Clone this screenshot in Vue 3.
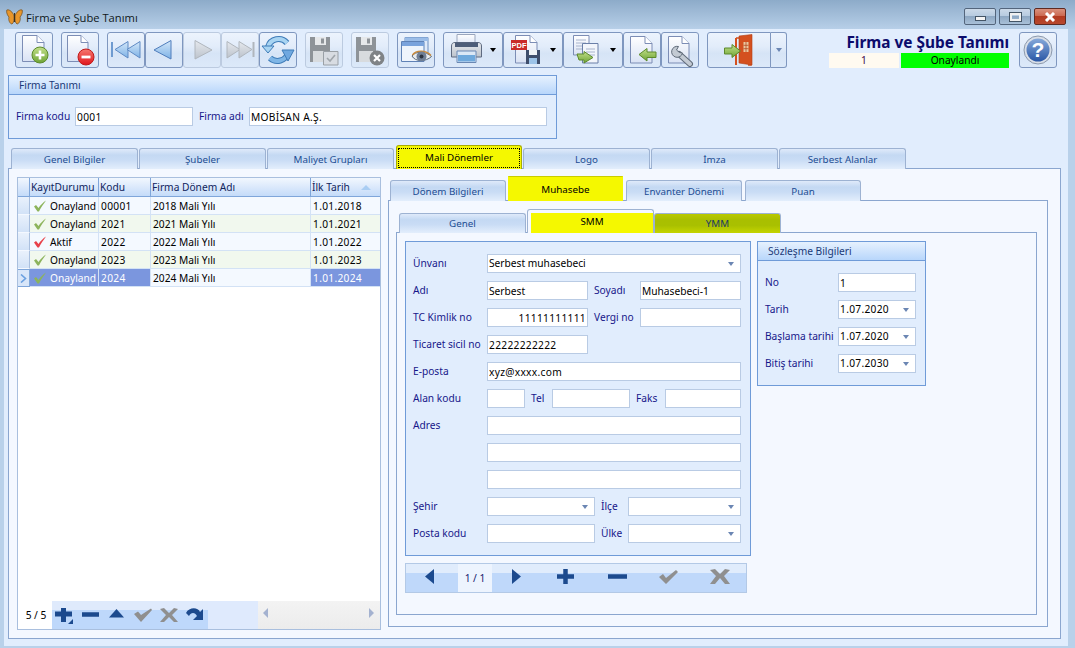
<script setup>
const anaSekmeler = ['Genel Bilgiler', 'Şubeler', 'Maliyet Grupları', 'Mali Dönemler', 'Logo', 'İmza', 'Serbest Alanlar']
const donemSekmeler = ['Dönem Bilgileri', 'Muhasebe', 'Envanter Dönemi', 'Puan']

const donemler = [
  { durum: 'Onayland', kod: '00001', ad: '2018 Mali Yılı', tarih: '1.01.2018', renk: '#8db45c' },
  { durum: 'Onayland', kod: '2021', ad: '2021 Mali Yılı', tarih: '1.01.2021', renk: '#8db45c' },
  { durum: 'Aktif', kod: '2022', ad: '2022 Mali Yılı', tarih: '1.01.2022', renk: '#e8414a' },
  { durum: 'Onayland', kod: '2023', ad: '2023 Mali Yılı', tarih: '1.01.2023', renk: '#8db45c' },
  { durum: 'Onayland', kod: '2024', ad: '2024 Mali Yılı', tarih: '1.01.2024', renk: '#8db45c' }
]

const sozlesme = [
  { etiket: 'Tarih', deger: '1.07.2020' },
  { etiket: 'Başlama tarihi', deger: '1.07.2020' },
  { etiket: 'Bitiş tarihi', deger: '1.07.2030' }
]
</script>

<template>
  <div class="window">
    <svg class="defs" width="0" height="0">
      <defs>
        <linearGradient id="sayfa" x1="0" y1="0" x2="0" y2="1"><stop offset="0" stop-color="#ffffff" /><stop offset="1" stop-color="#d9e2f4" /></linearGradient>
        <linearGradient id="mavi" x1="0" y1="0" x2="0" y2="1"><stop offset="0" stop-color="#d4e7f9" /><stop offset="1" stop-color="#7db2e6" /></linearGradient>
        <linearGradient id="gri" x1="0" y1="0" x2="0" y2="1"><stop offset="0" stop-color="#e6e9ee" /><stop offset="1" stop-color="#bcc3cc" /></linearGradient>
        <linearGradient id="yesil" x1="0" y1="0" x2="0" y2="1"><stop offset="0" stop-color="#c3e08a" /><stop offset="1" stop-color="#6ea436" /></linearGradient>
        <linearGradient id="kirmizi" x1="0" y1="0" x2="0" y2="1"><stop offset="0" stop-color="#f67a70" /><stop offset="1" stop-color="#e0141c" /></linearGradient>
        <linearGradient id="yardim" x1="0" y1="0" x2="0" y2="1"><stop offset="0" stop-color="#86a9da" /><stop offset="1" stop-color="#2a57a5" /></linearGradient>
      </defs>
    </svg>

    <div class="titlebar">
      <svg class="kelebek" width="17" height="16" viewBox="0 0 17 16">
        <path d="M8 7C7 3 3 0 .8 1 0 4 2 7 3 8 2 11 4 15 6 15 8 14 8 10 8 7Z" fill="#e8962c" stroke="#6b4a20" stroke-width=".7" />
        <path d="M9 7C10 3 14 0 16.2 1 17 4 15 7 14 8 15 11 13 15 11 15 9 14 9 10 9 7Z" fill="#e8962c" stroke="#6b4a20" stroke-width=".7" />
        <path d="M8.5 4V13" stroke="#3a3020" stroke-width="1" />
      </svg>
      <span class="baslik">Firma ve Şube Tanımı</span>
      <div class="win-btns">
        <div class="win-btn"><i class="ico-min"></i></div>
        <div class="win-btn"><i class="ico-max"></i></div>
        <div class="win-btn kapat">
          <svg width="14" height="10" viewBox="0 0 14 10"><path d="M3 1 11 9M11 1 3 9" stroke="#fff" stroke-width="3" /></svg>
        </div>
      </div>
    </div>

    <div class="body">
      <div class="toolbar">
        <button class="tb">
          <svg width="38" height="36"><path d="M7.5 3.5H22L29 10.5V29.5H7.5Z" fill="url(#sayfa)" stroke="#7c8db5" /><path d="M22 3.5V10.5H29" fill="#fff" stroke="#7c8db5" /><circle cx="25" cy="23" r="8" fill="url(#yesil)" stroke="#5c8a2c" /><path d="M25 18.5V27.5M20.5 23H29.5" stroke="#fff" stroke-width="2.6" /></svg>
        </button>
        <button class="tb ara">
          <svg width="38" height="36"><path d="M6.5 3.5H20L27 10.5V29.5H6.5Z" fill="url(#sayfa)" stroke="#7c8db5" /><path d="M20 3.5V10.5H27" fill="#fff" stroke="#7c8db5" /><circle cx="25" cy="25" r="8" fill="url(#kirmizi)" stroke="#c01818" /><path d="M20.5 25H29.5" stroke="#fff" stroke-width="2.8" /></svg>
        </button>
        <button class="tb ara">
          <svg width="38" height="36"><path d="M5 10V25" stroke="#6f9bd0" stroke-width="2" /><path d="M8 17.5 21 9.5V26Z" fill="url(#mavi)" stroke="#5f8ac4" /><path d="M20 17.5 33 9.5V26Z" fill="url(#mavi)" stroke="#5f8ac4" /></svg>
        </button>
        <button class="tb">
          <svg width="38" height="36"><path d="M9 18 26 8.5V27Z" fill="url(#mavi)" stroke="#4f7dbc" /></svg>
        </button>
        <button class="tb pasif">
          <svg width="38" height="36"><path d="M29 18 12 8.5V27Z" fill="url(#gri)" stroke="#b0b6bd" /></svg>
        </button>
        <button class="tb pasif">
          <svg width="38" height="36"><path d="M19 17.5 6 9.5V26Z" fill="url(#gri)" stroke="#b0b6bd" /><path d="M31 17.5 18 9.5V26Z" fill="url(#gri)" stroke="#b0b6bd" /><path d="M32.5 10V25" stroke="#b0b6bd" stroke-width="2" /></svg>
        </button>
        <button class="tb">
          <svg width="38" height="36" fill="none"><path d="M9 15A11 11 0 0 1 28 11" stroke="#3f7cb8" stroke-width="6" /><path d="M9 15A11 11 0 0 1 28 11" stroke="#a8d4f2" stroke-width="4" /><path d="M29 21A11 11 0 0 1 11 26" stroke="#3f7cb8" stroke-width="6" /><path d="M29 21A11 11 0 0 1 11 26" stroke="#7fb6e6" stroke-width="4" /><path d="M3 14H15L9 21Z" fill="#a8d4f2" stroke="#3f7cb8" /><path d="M23 18H35L29 29Z" fill="#6fa8e0" stroke="#3f7cb8" /></svg>
        </button>
        <button class="tb pasif ara">
          <svg width="38" height="36"><path d="M5 5H25V30H5Z" fill="#8e9398" /><path d="M10 5H21V13H10Z" fill="#e6e8ea" /><path d="M16 6.5H19V11.5H16Z" fill="#8e9398" /><path d="M8 19H22V30H8Z" fill="#d8dbde" /><path d="M18.5 19.5H33V33H18.5Z" fill="#d8dce2" stroke="#9aa0a6" /><path d="M22 26 25 29 30 23" fill="none" stroke="#a0a6ac" stroke-width="1.6" /></svg>
        </button>
        <button class="tb pasif ara">
          <svg width="38" height="36"><path d="M5 5H25V30H5Z" fill="#8e9398" /><path d="M10 5H21V13H10Z" fill="#e6e8ea" /><path d="M16 6.5H19V11.5H16Z" fill="#8e9398" /><path d="M8 19H22V30H8Z" fill="#d8dbde" /><circle cx="26" cy="26" r="7.5" fill="#7f8386" /><path d="M23 23 29 29M29 23 23 29" stroke="#fff" stroke-width="2.2" /></svg>
        </button>
        <button class="tb ara">
          <svg width="38" height="36"><path d="M8 5.500H31V24H8Z" fill="#dfeafa" stroke="#6d8fc0" /><path d="M8 5.500H31V9H8Z" fill="#9bbde8" /><path d="M4.500 9.500H27V29.500H4.500Z" fill="#eef4fc" stroke="#5f82b6" /><path d="M5 10H27V14H5Z" fill="#7aa3dc" /><path d="M15 24C18 19 29 19 34.500 24.500 29 30 18 30 15 24Z" fill="#e9ecef" stroke="#5b6a7a" /><path d="M15.500 23C19 18 29 18 34 23.500" fill="none" stroke="#c98a3c" stroke-width="1.400" /><circle cx="24.500" cy="24.500" r="5" fill="#6f7f96" /><circle cx="24.500" cy="24.500" r="2" fill="#2b3340" /></svg>
        </button>
        <button class="tb acilir ara">
          <svg width="42" height="36"><path d="M14 2.500H32V13H14Z" fill="url(#sayfa)" stroke="#9aa6bd" /><path d="M8.500 14C8.500 11.500 10 10.500 12 10.500H35C37 10.500 38.500 11.500 38.500 14V25H8.500Z" fill="url(#gri)" stroke="#5e6a80" /><path d="M12 10.500H35V15H12Z" fill="#4d5d78" /><path d="M14 19H33V30.500H14Z" fill="#dbe8f6" stroke="#6a88b4" /><path d="M15 23H32V29.500H15Z" fill="#6fa9dc" /></svg>
          <i class="ok-siyah"></i>
        </button>
        <button class="tb acilir">
          <svg width="42" height="36"><path d="M12.500 3.500H27L34 10.500V31H12.500Z" fill="url(#sayfa)" stroke="#7c8db5" /><path d="M27 3.500V10.500H34" fill="#fff" stroke="#7c8db5" /><rect x="8" y="8" width="16" height="10" fill="#c92a2a" /><text x="16" y="16" class="pdf" text-anchor="middle">PDF</text><path d="M23 18H37V32H23Z" fill="#3f4e6c" /><path d="M26 18H34V23H26Z" fill="#f0f3f7" /><path d="M26 26H34V32H26Z" fill="#9cc3e8" /></svg>
          <i class="ok-siyah"></i>
        </button>
        <button class="tb acilir">
          <svg width="42" height="36"><path d="M10.500 3.500H26V23H10.500Z" fill="url(#sayfa)" stroke="#7c8db5" /><path d="M13 8H23M13 11H23M13 14H23M13 17H23" stroke="#a8b4cc" /><path d="M19.500 11.500H35V31H19.500Z" fill="#f2f5fb" stroke="#6a7fa8" /><path d="M23 17H32M23 20H32M23 23H32" stroke="#a8b4cc" /><path d="M14 22H21V19.500L30 25.500 21 31V28H16Z" fill="url(#yesil)" stroke="#5c8a2c" /></svg>
          <i class="ok-siyah"></i>
        </button>
        <button class="tb">
          <svg width="38" height="36"><path d="M7.500 4.500H22L29 11.500V31H7.500Z" fill="url(#sayfa)" stroke="#7c8db5" /><path d="M22 4.500V11.500H29" fill="#fff" stroke="#7c8db5" /><path d="M16 22.500 24 16.500V20H33V25.500H24V29Z" fill="url(#yesil)" stroke="#5c8a2c" /></svg>
        </button>
        <button class="tb">
          <svg width="38" height="36" fill="none"><path d="M7.500 4.500H21L28 11.500V31H7.500Z" fill="url(#sayfa)" stroke="#7c8db5" /><path d="M21 4.500V11.500H28" fill="#fff" stroke="#7c8db5" /><path d="M18 22 29 32" stroke="#5f6a78" stroke-width="6" stroke-linecap="round" /><path d="M18 22 29 32" stroke="#c3cad3" stroke-width="4" stroke-linecap="round" /><path d="M17.500 14.500A5.500 5.500 0 1 0 21.500 21L18.500 20.500 15.500 18Z" fill="#c3cad3" stroke="#5f6a78" /></svg>
        </button>
        <div class="bolunmus ara">
          <button class="tb cikis">
            <svg width="64" height="36"><path d="M29 6H44V33H41" fill="none" stroke="#d4501f" stroke-width="1.500" /><path d="M32 4 45 2.500V33L32 31Z" fill="#d4501f" stroke="#b13e14" stroke-width=".6" /><path d="M29 6V33" stroke="#d4501f" stroke-width="2" /><path d="M36.500 10H41.500V20H36.500Z" fill="#e9c8a0" /><path d="M39 10V20M36.500 13.300H41.500M36.500 16.700H41.500" stroke="#b13e14" stroke-width=".7" /><path d="M17.500 16H25V12.500L33.500 19 25 25.500V22H17.500Z" fill="url(#yesil)" stroke="#5c8a2c" /></svg>
          </button>
          <button class="tb cikis-ok"><i class="ok-mavi"></i></button>
        </div>

        <div class="form-baslik">
          <div class="form-adi">Firma ve Şube Tanımı</div>
          <div class="durum">
            <span class="durum-no">1</span>
            <span class="durum-ad">Onaylandı</span>
          </div>
        </div>
        <button class="tb yardim">
          <svg width="38" height="36"><circle cx="19" cy="18" r="14" fill="#d9dfe8" stroke="#8b99ad" /><circle cx="19" cy="18" r="11.500" fill="url(#yardim)" /><text x="19" y="25" class="soru" text-anchor="middle">?</text></svg>
        </button>
      </div>

      <section class="panel firma">
        <h3 class="panel-baslik">Firma Tanımı</h3>
        <div class="firma-satir">
          <label class="etiket firma-e1">Firma kodu</label>
          <input class="fld firma-kod say" value="0001" readonly>
          <label class="etiket firma-e2">Firma adı</label>
          <input class="fld firma-ad say" value="MOBİSAN A.Ş." readonly>
        </div>
      </section>

      <div class="tabs ana">
        <div v-for="s in anaSekmeler" :key="s" class="tab" :class="{ secili: s === 'Mali Dönemler' }">
          <span>{{ s }}</span>
        </div>
      </div>

      <div class="sayfa ana-sayfa">
        <div class="grid">
          <div class="g-row g-head">
            <div class="c c0"></div>
            <div class="c c1">KayıtDurumu</div>
            <div class="c c2">Kodu</div>
            <div class="c c3">Firma Dönem Adı</div>
            <div class="c c4">İlk Tarih<i class="sirala"></i></div>
          </div>
          <div v-for="(d, i) in donemler" :key="d.kod" class="g-row veri" :class="{ alt: i % 2 === 1, sec: i === 4 }">
            <div class="c c0"><svg v-if="i === 4" width="7" height="9" viewBox="0 0 7 9"><path d="M1 .5 5.500 4.500 1 8.500" fill="none" stroke="#6aa0e0" stroke-width="1.600" /></svg></div>
            <div class="c c1">
              <svg width="14" height="12" viewBox="0 0 14 12"><path d="M1 6.500 3 5 5.500 8C7.500 5 10 2.500 13 .5 10.500 4 8 7.500 6 11.500H4.500Z" :fill="d.renk" /></svg>
              {{ d.durum }}
            </div>
            <div class="c c2 say">{{ d.kod }}</div>
            <div class="c c3">{{ d.ad }}</div>
            <div class="c c4 say">{{ d.tarih }}</div>
          </div>
          <div class="g-bos"></div>
          <div class="g-alt">
            <div class="sayac">5 / 5</div>
            <div class="g-nav">
              <svg width="156" height="28">
                <path d="M3 13H20M11.500 7V21" stroke="#1c4a8e" stroke-width="5" />
                <path d="M21 18V23H16Z" fill="#1c4a8e" />
                <path d="M30 13.500H47" stroke="#1c4a8e" stroke-width="4.500" />
                <path d="M57 16.500 64.500 8 72 16.500Z" fill="#1c4a8e" />
                <path d="M82 13 86 10.500 89 14 99 7.500 100 9 89 21Z" fill="#8f8f8f" />
                <path d="M108 8 112 7 117 12 122 7 126 8 120 14 126 21 122 21 117 16 112 21 108 21 114 14Z" fill="#8f8f8f" />
                <path d="M134 12C137 6 146 6 148 11L151 8V19H141L145 15C143 11 139 11 137 15Z" fill="#1c4a8e" />
              </svg>
            </div>
            <div class="g-nav2"></div>
            <div class="scroll"><i class="sol"></i><i class="sag"></i></div>
          </div>
        </div>

        <div class="sag-kolon">
          <div class="tabs donem">
            <div v-for="s in donemSekmeler" :key="s" class="tab" :class="{ secili: s === 'Muhasebe' }"><span>{{ s }}</span></div>
          </div>
          <div class="sayfa donem-sayfa">
            <div class="tabs muh">
              <div class="tab"><span>Genel</span></div>
              <div class="tab secili"><span class="sari">SMM</span></div>
              <div class="tab ymm"><span>YMM</span></div>
            </div>
            <div class="sayfa muh-sayfa">
              <div class="sol-form">
                <section class="panel smm">
                  <div class="satir">
                    <label class="etiket e-gen">Ünvanı</label>
                    <div class="fld combo w254">Serbest muhasebeci<i class="ok-mavi"></i></div>
                  </div>
                  <div class="satir">
                    <label class="etiket e-gen">Adı</label>
                    <input class="fld w101" value="Serbest" readonly>
                    <label class="etiket e-ara">Soyadı</label>
                    <input class="fld w101" value="Muhasebeci-1" readonly>
                  </div>
                  <div class="satir">
                    <label class="etiket e-gen">TC Kimlik no</label>
                    <input class="fld w101 sagda say" value="11111111111" readonly>
                    <label class="etiket e-ara">Vergi no</label>
                    <input class="fld w101" readonly>
                  </div>
                  <div class="satir">
                    <label class="etiket e-gen">Ticaret sicil no</label>
                    <input class="fld w101 say" value="22222222222" readonly>
                  </div>
                  <div class="satir">
                    <label class="etiket e-gen">E-posta</label>
                    <input class="fld w254 say" value="xyz@xxxx.com" readonly>
                  </div>
                  <div class="satir">
                    <label class="etiket e-gen">Alan kodu</label>
                    <input class="fld w38" readonly>
                    <label class="etiket e-tel">Tel</label>
                    <input class="fld w78" readonly>
                    <label class="etiket e-faks">Faks</label>
                    <input class="fld w76" readonly>
                  </div>
                  <div class="satir">
                    <label class="etiket e-gen">Adres</label>
                    <input class="fld w254" readonly>
                  </div>
                  <div class="satir bos-etiket"><input class="fld w254" readonly></div>
                  <div class="satir bos-etiket"><input class="fld w254" readonly></div>
                  <div class="satir">
                    <label class="etiket e-gen">Şehir</label>
                    <div class="fld combo w108"><i class="ok-mavi"></i></div>
                    <label class="etiket e-ilce">İlçe</label>
                    <div class="fld combo w113"><i class="ok-mavi"></i></div>
                  </div>
                  <div class="satir">
                    <label class="etiket e-gen">Posta kodu</label>
                    <input class="fld w108" readonly>
                    <label class="etiket e-ilce">Ülke</label>
                    <div class="fld combo w113"><i class="ok-mavi"></i></div>
                  </div>
                </section>
                <div class="alt-nav">
                  <svg width="52" height="30"><path d="M28 6V21L19 13.500Z" fill="#1c4a8e" /></svg>
                  <div class="nav-sayfa">1 / 1</div>
                  <svg width="254" height="30">
                    <path d="M20 6V21L29 13.500Z" fill="#1c4a8e" />
                    <path d="M65 13.500H82M73.500 6V21" stroke="#1c4a8e" stroke-width="4.500" />
                    <path d="M116 13.500H135" stroke="#1c4a8e" stroke-width="4.500" />
                    <path d="M167 14 171 11 174 15 184 7 186 9 174 21Z" fill="#8f8f8f" />
                    <path d="M218 7 223 6 228 11 233 6 238 7 232 13 238 21 233 21 228 15 223 21 218 21 224 13Z" fill="#8f8f8f" />
                  </svg>
                </div>
              </div>

              <section class="panel soz">
                <h3 class="panel-baslik">Sözleşme Bilgileri</h3>
                <div class="soz-ic">
                  <div class="satir">
                    <label class="etiket e-soz">No</label>
                    <input class="fld w78" value="1" readonly>
                  </div>
                  <div v-for="t in sozlesme" :key="t.etiket" class="satir">
                    <label class="etiket e-soz">{{ t.etiket }}</label>
                    <div class="fld combo w78 say">{{ t.deger }}<i class="ok-mavi"></i></div>
                  </div>
                </div>
              </section>
            </div>
          </div>
        </div>
      </div>
    </div>
  </div>
</template>

<style>
html, body { margin: 0; padding: 0; }
</style>

<style scoped>
.window {
  width: 1075px;
  height: 648px;
  background: #b9d1ea;
  display: flex;
  flex-direction: column;
  overflow: hidden;
  font-family: "Noto Sans", "Liberation Sans", sans-serif;
  font-size: 10.2px;
  color: #000;
}
.defs { position: absolute; }
.say { letter-spacing: .3px; }

.titlebar {
  height: 29px;
  flex: none;
  display: flex;
  align-items: center;
  padding: 0 9px 0 6px;
  background: linear-gradient(#8dabc9, #b7cfe8);
}
.baslik {
  margin-left: 3px;
  margin-top: 6px;
  font-family: "Open Sans", sans-serif;
  font-size: 11.2px;
  color: #101820;
}
.kelebek { margin-top: 5px; }
.win-btns { margin-left: auto; display: flex; gap: 3px; margin-top: 4px; }
.win-btn {
  width: 30px;
  height: 15px;
  border: 1px solid #53657c;
  border-radius: 2px;
  background: linear-gradient(#cbd9e8 0, #b7cbe0 45%, #8ea8c3 50%, #a9c0d8 100%);
  display: flex;
  align-items: center;
  justify-content: center;
}
.win-btn.kapat { border-color: #5e2a22; background: linear-gradient(#d9907c 0, #cc6a52 45%, #b23a20 50%, #b8482e 100%); }
.ico-min { width: 9px; height: 3px; background: #f4f4f4; border: 1px solid #445566; margin-top: 4px; }
.ico-max { width: 7px; height: 4px; border: 2px solid #f0f0f0; outline: 1px solid #445566; }

.body {
  margin: 0 7px 2px 4px;
  flex: 1;
  background: #e1edfd;
  padding-top: 3px;
  display: flex;
  flex-direction: column;
}

.toolbar {
  display: flex;
  height: 36px;
  padding: 0 11px;
  flex: none;
}
.tb {
  width: 38px;
  height: 36px;
  padding: 0;
  flex: none;
  position: relative;
  border: 1px solid #7f97bf;
  border-radius: 3px;
  background: linear-gradient(#ecf3fd 0, #e2ecfa 40%, #d6e4f6 60%, #dce9f9 100%);
  display: flex;
  align-items: center;
}
.tb svg { display: block; margin: -1px; flex: none; }
.tb.ara, .bolunmus.ara { margin-left: 8px; }
.tb.pasif { border-color: #bccbe0; }
.tb.acilir { width: 60px; }
.ok-siyah {
  width: 0;
  height: 0;
  margin-left: 6px;
  border-left: 3.5px solid transparent;
  border-right: 3.5px solid transparent;
  border-top: 4px solid #000;
}
.ok-mavi {
  width: 0;
  height: 0;
  flex: none;
  border-left: 3.5px solid transparent;
  border-right: 3.5px solid transparent;
  border-top: 4px solid #6b86b3;
}
.bolunmus { display: flex; }
.tb.cikis { width: 64px; border-radius: 3px 0 0 3px; }
.tb.cikis-ok { width: 16px; border-left: none; border-radius: 0 3px 3px 0; justify-content: center; }
.pdf { font: bold 7.5px "Liberation Sans", sans-serif; fill: #fff; }
.soru { font: bold 21px "Liberation Sans", sans-serif; fill: #fff; }

.form-baslik { margin-left: auto; width: 180px; }
.form-adi {
  text-align: right;
  font-weight: 700;
  font-size: 15.4px;
  line-height: 21px;
  color: #0b0b6c;
}
.durum { display: flex; gap: 2px; height: 15px; line-height: 15px; text-align: center; }
.durum-no { width: 70px; background: #fffaf0; color: #3c0a4a; }
.durum-ad { width: 108px; background: #00ff00; }
.tb.yardim { margin-left: 10px; }

.panel {
  box-sizing: border-box;
  border: 1px solid #6f9bd8;
  background: #e1edfd;
}
.panel-baslik {
  margin: 0;
  height: 18px;
  line-height: 18px;
  padding-left: 10px;
  font-weight: 400;
  font-size: 10.2px;
  color: #1b3a78;
  background: linear-gradient(#e6f1fe, #b8d6fb);
  border-bottom: 1px solid #6f9bd8;
}
.firma { margin: 7px 0 0 4px; width: 549px; height: 64px; flex: none; }
.firma-satir { display: flex; align-items: center; margin-top: 12px; }

.etiket { color: #17178a; white-space: nowrap; flex: none; margin-top: -1px; }
.firma-e1 { margin-left: 7px; width: 59px; }
.firma-e2 { margin-left: 6px; width: 50px; }
.firma-kod { width: 118px; }
.firma-ad { width: 298px; }

.fld {
  box-sizing: border-box;
  height: 19px;
  flex: none;
  margin: 0;
  padding: 0 1px;
  border: 1px solid #b9cbe4;
  background: #fff;
  font: inherit;
  color: #000;
  line-height: 17px;
  outline: none;
  border-radius: 0;
}
.combo { display: flex; align-items: center; padding-right: 6px; }
.combo .ok-mavi { margin-left: auto; }
.sagda { text-align: right; }
.w254 { width: 254px; }
.w101 { width: 101px; }
.w38 { width: 38px; }
.w78 { width: 78px; }
.w76 { width: 76px; }
.w108 { width: 108px; }
.w113 { width: 113px; }

.tabs { display: flex; align-items: flex-end; position: relative; z-index: 1; }
.tab {
  box-sizing: border-box;
  width: 127px;
  height: 21px;
  margin-right: 1px;
  flex: none;
  display: flex;
  align-items: center;
  justify-content: center;
  border: 1px solid #9db2d2;
  border-bottom: none;
  border-radius: 3px 3px 0 0;
  background: linear-gradient(#dfeafa 0, #c4d9f3 30%, #c9dcf5 55%, #e3eefc 100%);
  color: #1d4d93;
  font-size: 9.8px;
}
.tabs.ana { margin: 6px 0 0 7px; height: 24px; flex: none; margin-bottom: -1px; }
.tabs.ana .tab { padding-top: 1px; }
.tabs.ana .tab.secili {
  height: 24px;
  margin-left: 1px;
  width: 126px;
  background: #f5f800;
  border: 1px solid #a9ad00;
  border-bottom: none;
  color: #000;
  padding: 2px 1px 1px;
}
.tabs.ana .tab.secili span {
  flex: 1;
  height: 100%;
  box-sizing: border-box;
  text-align: center;
  line-height: 17px;
  border: 1px dotted #000;
}

.sayfa { box-sizing: border-box; border: 1px solid #8ba6cf; background: #f4f8ff; }
.ana-sayfa {
  margin-left: 4px;
  width: 1053px;
  height: 471px;
  flex: none;
  padding: 7px 0 0 8px;
  display: flex;
  gap: 7px;
}

.grid {
  box-sizing: border-box;
  width: 364px;
  height: 453px;
  margin-top: 1px;
  border: 1px solid #a9bfde;
  background: #fff;
  display: flex;
  flex-direction: column;
  flex: none;
}
.g-row { display: flex; height: 18px; flex: none; background: #f4f9ff; }
.g-row.alt { background: #f1f8ee; }
.c {
  box-sizing: border-box;
  border-right: 1px solid #d3e2f5;
  border-bottom: 1px solid #d3e2f5;
  padding-left: 2px;
  line-height: 17px;
  white-space: nowrap;
  overflow: hidden;
  flex: none;
  display: flex;
  align-items: center;
}
.veri .c { padding-top: 1px; }
.c0 { width: 12px; padding: 0; background: linear-gradient(#e9f1fc, #d2e2f7); border-right-color: #a9bfde; border-bottom-color: #f4f8ff; justify-content: center; }
.c1 { width: 69px; }
.c1 svg { margin: 0 3px 0 1px; flex: none; }
.c2 { width: 52px; }
.c3 { width: 160px; }
.c4 { width: 69px; border-right: none; }
.g-head { height: 19px; }
.g-head .c { background: linear-gradient(#f2f7fe, #c4dbf9); border-right-color: #7fa6da; border-bottom: 1px solid #7fa6da; color: #10245c; line-height: 18px; padding-left: 1px; }
.g-head .c0 { padding: 0; }
.sirala {
  margin-left: 11px;
  width: 0;
  height: 0;
  border-left: 5px solid transparent;
  border-right: 5px solid transparent;
  border-bottom: 5px solid #a9cdf3;
}
.g-row.sec .c1, .g-row.sec .c2, .g-row.sec .c4 { background: #7b96de; color: #fff; }
.g-row.sec .c3 { background: #f4f9ff; }
.g-row.sec .c0 { background: #d8e6f9; border: 1px solid #7fa6da; border-left: 0; }

.g-bos { flex: 1; }
.g-alt { height: 28px; display: flex; flex: none; }
.sayac { width: 34px; line-height: 28px; text-align: center; padding-left: 2px; box-sizing: border-box; }
.g-nav { width: 156px; background: linear-gradient(#dfeafc 0, #dfeafc 9px, #bed8fb 9px, #bed8fb 100%); }
.g-nav svg { display: block; }
.g-nav2 { width: 50px; background: #dfeafd; }
.scroll {
  flex: 1;
  background: linear-gradient(#f3f3f3, #ececec);
  display: flex;
  justify-content: space-between;
  align-items: center;
  padding: 0 6px 4px 5px;
}
.scroll i { width: 0; height: 0; border-top: 5px solid transparent; border-bottom: 5px solid transparent; }
.scroll .sol { border-right: 5px solid #a4b2d0; }
.scroll .sag { border-left: 5px solid #a4b2d0; }

.sag-kolon { width: 660px; flex: none; display: flex; flex-direction: column; }
.tabs.donem { height: 25px; margin-left: 2px; margin-bottom: -1px; flex: none; }
.tabs.donem .tab { width: 116px; height: 21px; margin-right: 2px; }
.tabs.donem .tab.secili { height: 25px; width: 115px; margin-right: 3px; background: #f5f800; border-color: #f5f800; border-top-color: #c9cc00; color: #000; border-radius: 0; }
.tabs.donem .tab:nth-child(3) { margin-right: 3px; }
.donem-sayfa { height: 427px; padding: 8px 0 0 7px; flex: none; }

.tabs.muh { height: 24px; margin-left: 3px; margin-bottom: -1px; }
.tabs.muh .tab { height: 20px; padding-bottom: 1px; }
.tabs.muh .tab.secili {
  height: 24px;
  width: 127px;
  margin-right: 0;
  background: #f4f8ff;
  border-color: #9db2d2;
  padding: 3px 0 0 3px;
}
.sari { flex: 1; height: 100%; background: #f5f800; color: #000; text-align: center; line-height: 17px; }
.tab.ymm { background: linear-gradient(#b9c800 0, #a9bf00 30%, #a9c000 60%, #c4d400 100%); color: #1b3a62; }

.muh-sayfa {
  width: 641px;
  height: 383px;
  flex: none;
  padding: 8px 0 0 8px;
  display: flex;
  gap: 6px;
}
.sol-form { width: 346px; flex: none; }
.smm { height: 315px; padding: 12px 0 0 7px; }
.satir { display: flex; align-items: center; height: 19px; margin-bottom: 8px; }
.e-gen { width: 74px; }
.e-ara { width: 46px; margin-left: 6px; }
.e-tel { width: 21px; margin-left: 6px; }
.e-faks { width: 29px; margin-left: 6px; }
.e-ilce { width: 27px; margin-left: 6px; }
.bos-etiket { padding-left: 74px; }
.alt-nav {
  width: 342px;
  height: 30px;
  margin-top: 7px;
  display: flex;
  box-sizing: border-box;
  border: 1px solid #b3c9e6;
  background: linear-gradient(#e0ecfc 0, #e0ecfc 9px, #bfd8fa 9px, #bfd8fa 100%);
}
.alt-nav svg { display: block; flex: none; margin-top: -1px; }
.nav-sayfa { width: 34px; background: #edf4fe; text-align: center; line-height: 28px; color: #14206e; }

.soz { width: 169px; height: 145px; flex: none; }
.soz-ic { padding: 12px 0 0 7px; }
.e-soz { width: 73px; }
</style>
